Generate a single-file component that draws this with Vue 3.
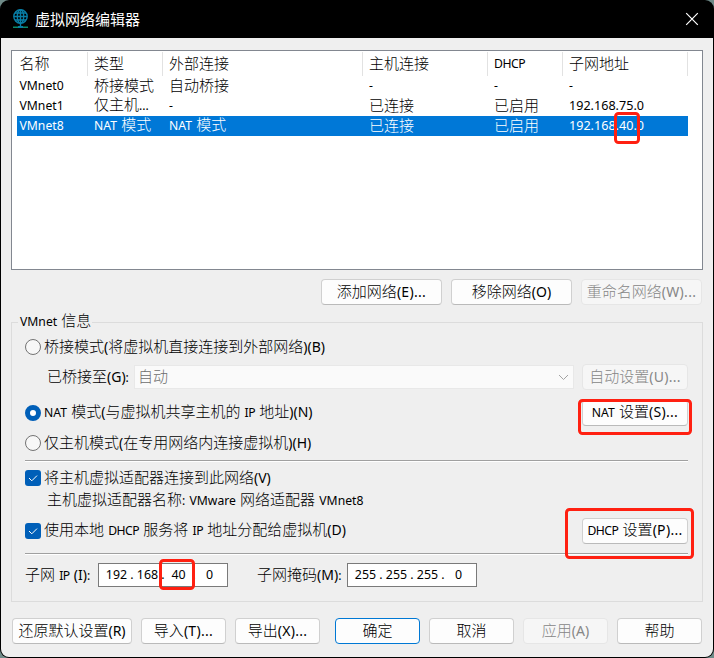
<script setup>
import { h } from 'vue'

const runClass = (run) => {
  if (/[\u4e00-\u9fff]/.test(run)) return 'han'
  if (/\.\.\.$/.test(run) && /[()]/.test(run)) return 'key dots'
  if (/[()]/.test(run)) return 'key'
  if (/DHCP|IP/.test(run)) return 'latin tight'
  return /\d\./.test(run) ? 'latin address' : 'latin'
}

// Splits a label into CJK runs, access-key runs and plain Latin runs.
const T = (props) =>
  h(
    'span',
    { class: 'label' },
    (props.t.match(/[\u4e00-\u9fff]+|[()]*\([A-Z]\)(?:\.\.\.)?|[()]|[^\u4e00-\u9fff()]+/g) || []).map((run) =>
      h('span', { class: runClass(run) }, run)
    )
  )
T.props = ['t']

const columns = ['名称', '类型', '外部连接', '主机连接', 'DHCP', '子网地址']
const networks = [
  ['VMnet0', '桥接模式', '自动桥接', '-', '-', '-'],
  ['VMnet1', '仅主机...', '-', '已连接', '已启用', '192.168.75.0'],
  ['VMnet8', 'NAT 模式', 'NAT 模式', '已连接', '已启用', '192.168.40.0']
]
const subnetIp = ['192', '168', '40', '0']
const subnetMask = ['255', '255', '255', '0']
</script>

<template>
  <div class="desktop">
    <div class="window">
      <header class="titlebar">
        <svg class="globe" width="18" height="20" viewBox="0 0 18 20" fill="none" stroke="#087da5" stroke-width="1.4">
          <circle cx="8.5" cy="7.5" r="6.7" />
          <ellipse cx="8.5" cy="7.5" rx="3.2" ry="6.7" />
          <path d="M8.5 1v16M2 7.5h13M3 4h11M3 11h11" />
          <path d="M1 18.2h5M11 18.2h5" stroke="#0b8a6c" />
          <path d="M6 18h5" stroke-width="2" />
        </svg>
        <h1>虚拟网络编辑器</h1>
        <svg class="close" width="14" height="14" viewBox="0 0 14 14" stroke="#fff" stroke-width="1.2">
          <path d="M1.2 1.2l11.6 11.6M12.8 1.2L1.2 12.8" />
        </svg>
      </header>

      <main class="body">
        <section class="list">
          <div class="line head">
            <div v-for="c in columns" :key="c" class="cell"><T :t="c" /></div>
          </div>
          <div v-for="(n, i) in networks" :key="i" class="line" :class="{ selected: i === 2 }">
            <div v-for="(c, j) in n" :key="j" class="cell"><T :t="c" /></div>
          </div>
        </section>

        <div class="actions">
          <button class="btn"><T t="添加网络(E)..." /></button>
          <button class="btn"><T t="移除网络(O)" /></button>
          <button class="btn" disabled><T t="重命名网络(W)..." /></button>
        </div>

        <section class="group">
          <div class="legend"><T t="VMnet 信息" /></div>
          <div class="row">
            <i class="radio"></i><T t="桥接模式(将虚拟机直接连接到外部网络)(B)" />
          </div>
          <div class="row bridge">
            <div class="caption"><T t="已桥接至(G):" /></div>
            <div class="combo">
              <T t="自动" />
              <svg width="11" height="7" viewBox="0 0 11 7" fill="none" stroke="#a3a3a3"><path d="M1 1l4.5 4.5L10 1" /></svg>
            </div>
            <button class="btn side" disabled><T t="自动设置(U)..." /></button>
          </div>
          <div class="row nat">
            <i class="radio on"></i><T t="NAT 模式(与虚拟机共享主机的 IP 地址)(N)" />
            <button class="btn side"><T t="NAT 设置(S)..." /></button>
          </div>
          <div class="row">
            <i class="radio"></i><T t="仅主机模式(在专用网络内连接虚拟机)(H)" />
          </div>
          <div class="rule"></div>
          <div class="row">
            <i class="check"><svg width="16" height="16" viewBox="0 0 16 16" fill="none" stroke="#fff"><path d="M4 8l2.8 2.8L12 5.6" /></svg></i>
            <T t="将主机虚拟适配器连接到此网络(V)" />
          </div>
          <div class="row adapter"><T t="主机虚拟适配器名称: VMware 网络适配器 VMnet8" /></div>
          <div class="row dhcp">
            <i class="check"><svg width="16" height="16" viewBox="0 0 16 16" fill="none" stroke="#fff"><path d="M4 8l2.8 2.8L12 5.6" /></svg></i>
            <T t="使用本地 DHCP 服务将 IP 地址分配给虚拟机(D)" />
            <button class="btn side"><T t="DHCP 设置(P)..." /></button>
          </div>
          <div class="rule second"></div>
          <div class="row subnet">
            <div class="ip-caption"><T t="子网 IP (I):" /></div>
            <div class="ip">
              <template v-for="(s, i) in subnetIp" :key="i"><b v-if="i">.</b><span>{{ s }}</span></template>
            </div>
            <div class="mask-caption"><T t="子网掩码(M):" /></div>
            <div class="ip">
              <template v-for="(s, i) in subnetMask" :key="i"><b v-if="i">.</b><span>{{ s }}</span></template>
            </div>
          </div>
        </section>

        <footer class="footer">
          <button class="btn"><T t="还原默认设置(R)" /></button>
          <button class="btn"><T t="导入(T)..." /></button>
          <button class="btn"><T t="导出(X)..." /></button>
          <button class="btn primary"><T t="确定" /></button>
          <button class="btn"><T t="取消" /></button>
          <button class="btn" disabled><T t="应用(A)" /></button>
          <button class="btn"><T t="帮助" /></button>
        </footer>
      </main>
    </div>

    <svg class="marks" width="714" height="658" fill="none" stroke="#ff2011" stroke-width="3">
      <rect x="615.5" y="113.5" width="23" height="29" rx="3" />
      <rect x="579.5" y="400.5" width="111" height="33" rx="3" />
      <rect x="566.5" y="509.5" width="126" height="48" rx="3" />
      <rect x="160.5" y="560.5" width="33" height="28" rx="3" />
    </svg>
  </div>
</template>

<style>
.label { display: inline-block; white-space: pre; line-height: 20px; padding-bottom: 2px; }
.label .han { font-size: 15px; font-weight: 300; }
.label .latin { font-size: 12.2px; word-spacing: 1px; }
.label .tight { letter-spacing: -0.5px; word-spacing: 1.5px; }
.label .address { font-size: 12.6px; }
.label .key { font-size: 14px; }
.label .dots { letter-spacing: 0.3px; }
</style>

<style scoped>
* { box-sizing: border-box; }
.desktop {
  position: relative;
  width: 714px;
  height: 658px;
  background: #6f8a88;
  font-family: "Noto Sans", "Noto Sans CJK SC", sans-serif;
  color: #000;
}
.window {
  width: 714px;
  height: 658px;
  padding: 0 1px 1px;
  background: #000;
  border-radius: 9px;
  overflow: hidden;
  display: flex;
  flex-direction: column;
}
.titlebar {
  height: 38px;
  flex: none;
  display: flex;
  align-items: center;
  padding: 0 14px 0 11px;
}
.titlebar h1 {
  margin: 0 auto 0 5px;
  font: 400 15px/20px "Noto Sans CJK SC", sans-serif;
  color: #fff;
}
.body {
  flex: 1;
  background: #efefef;
  border-radius: 0 0 8px 8px;
  padding: 12px 10px 0;
  display: flex;
  flex-direction: column;
}
.list {
  height: 220px;
  flex: none;
  background: #fff;
  border: 1px solid #828790;
  padding: 1px 0 0 5px;
}
.line {
  display: grid;
  grid-template-columns: 71px 75px 200px 125px 75px 125px;
  width: 671px;
  height: 20px;
}
.line.head { height: 24px; }
.cell {
  display: flex;
  align-items: center;
  padding-left: 6px;
  height: 20px;
  white-space: nowrap;
}
.head .cell { height: 24px; border-right: 1px solid #e2e2e2; }
.cell:first-child { padding-left: 2.5px; }
.line.selected { background: #0078d7; color: #fff; }
.btn {
  height: 26px;
  padding: 0;
  border: 1px solid #d0d0d0;
  border-bottom-color: #bababa;
  border-radius: 4px;
  background: #fdfdfd;
  color: #000;
  font-family: inherit;
  display: flex;
  justify-content: center;
  align-items: center;
}
.btn:disabled { background: #f6f6f6; border-color: #e6e6e6; color: #868686; }
.btn.primary { border-color: #0078d4; }
.actions {
  display: flex;
  justify-content: flex-end;
  gap: 9px;
  padding: 9px 1px 0 0;
}
.actions .btn { width: 121px; }
.group {
  flex: none;
  height: 280px;
  margin-top: 17px;
  border: 1px solid #dcdcdc;
  padding: 0 14px 0 13px;
}
.legend {
  display: flex;
  align-items: center;
  width: 74px;
  height: 20px;
  margin: -11px 0 0 -7px;
  padding-left: 2px;
  background: #efefef;
}
.row { display: flex; align-items: center; height: 30px; }
.radio, .check { flex: none; width: 16px; height: 16px; margin-right: 3px; }
.radio { border: 1px solid #737373; border-radius: 50%; background: #f7f7f7; }
.radio.on { border: 5px solid #005fb8; background: #fff; }
.check { border-radius: 3px; background: #005fb8; display: flex; }
.side { width: 106px; margin-left: auto; }
.caption { width: 109px; padding-left: 22px; }
.combo {
  width: 440px;
  height: 24px;
  border: 1px solid #e8e8e8;
  background: #fafafa;
  color: #6d6d6d;
  display: flex;
  align-items: center;
  justify-content: space-between;
  padding: 0 4px 0 3px;
}
.nat { margin-top: 6px; }
.rule { height: 2px; margin: 2px 0 1px; border-top: 1px solid #a0a0a0; background: #fff; }
.adapter { height: 16px; padding-left: 22px; }
.dhcp { margin-top: 7px; }
.rule.second { margin: 7px 0 5px; }
.ip-caption { width: 73px; }
.mask-caption { width: 119px; padding-left: 29px; }
.ip {
  width: 130px;
  height: 24px;
  background: #fff;
  border: 1px solid #7a7a7a;
  display: flex;
  align-items: center;
  padding: 0 0 1px 4px;
  font-size: 12.4px;
  line-height: 20px;
}
.ip span { width: 27px; text-align: center; }
.ip b { width: 4px; font-weight: 400; text-align: center; }
.footer {
  display: flex;
  gap: 9px;
  padding: 16px 1px 0;
}
.footer .btn { width: 85px; }
.footer .btn:first-child { width: 120px; }
.footer .primary { margin-left: 6px; }
.marks { position: absolute; left: 0; top: 0; }
</style>
